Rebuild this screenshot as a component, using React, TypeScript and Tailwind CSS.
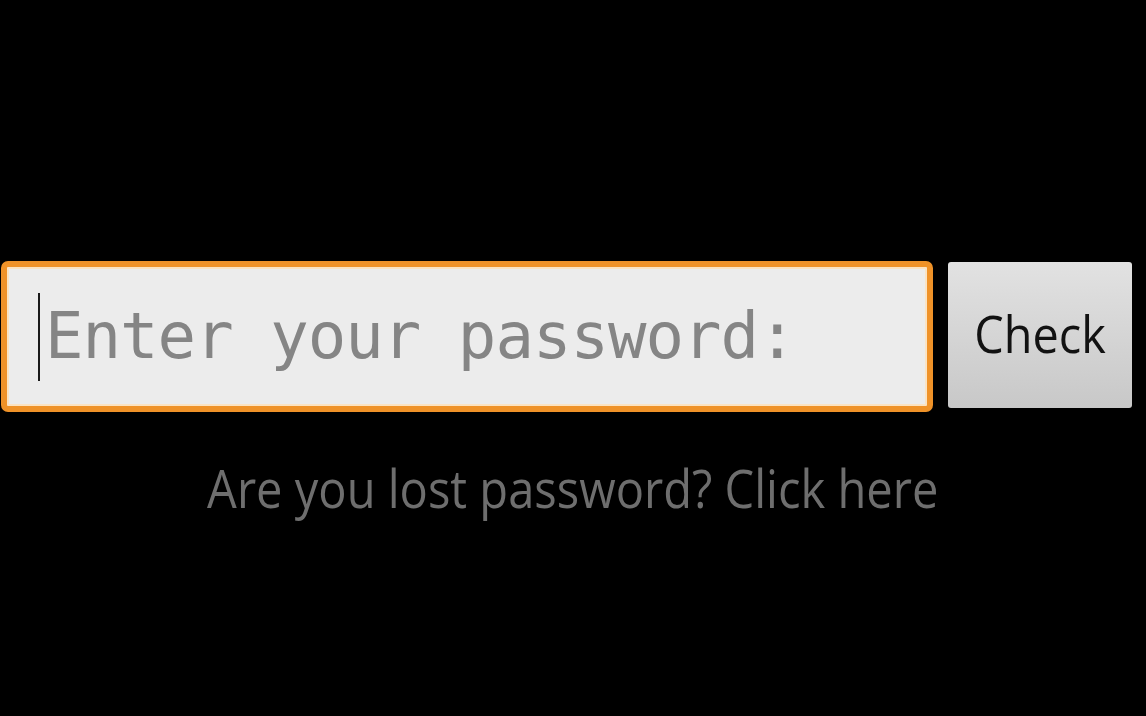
export default function App() {
  return (
    <div className="w-[1146px] h-[716px] bg-black flex flex-col overflow-hidden">
      <div className="flex items-start pt-[261px] pl-px pr-[14px] gap-[15px]">
        <div className="w-[932px] h-[151px] rounded-[7px] border-[6px] border-[#ef9228] bg-[#ececec] shadow-[inset_0_0_0_2px_#fbe3c2] flex items-center pl-[31px]">
          <div className="w-[2px] h-[88px] bg-[#1a1a1a] mr-[5px]" />
          <span className="font-['DejaVu_Sans_Mono',monospace] text-[64px] leading-none tracking-[-1px] text-[#858585] -mt-[2px]">
            Enter your password:
          </span>
        </div>
        <button className="mt-px w-[184px] h-[146px] rounded-[3px] bg-gradient-to-b from-[#e2e2e2] to-[#c8c8c8] flex items-center justify-center">
          <span className="font-['Open_Sans',sans-serif] text-[52px] leading-none text-[#121212] scale-x-[0.9] -mt-[4px]">
            Check
          </span>
        </button>
      </div>
      <div className="mt-[49px] flex justify-center">
        <span className="font-['Open_Sans',sans-serif] text-[53px] leading-none text-[#6e6e6e] whitespace-nowrap scale-x-[0.888]">
          Are you lost password? Click here
        </span>
      </div>
    </div>
  );
}
